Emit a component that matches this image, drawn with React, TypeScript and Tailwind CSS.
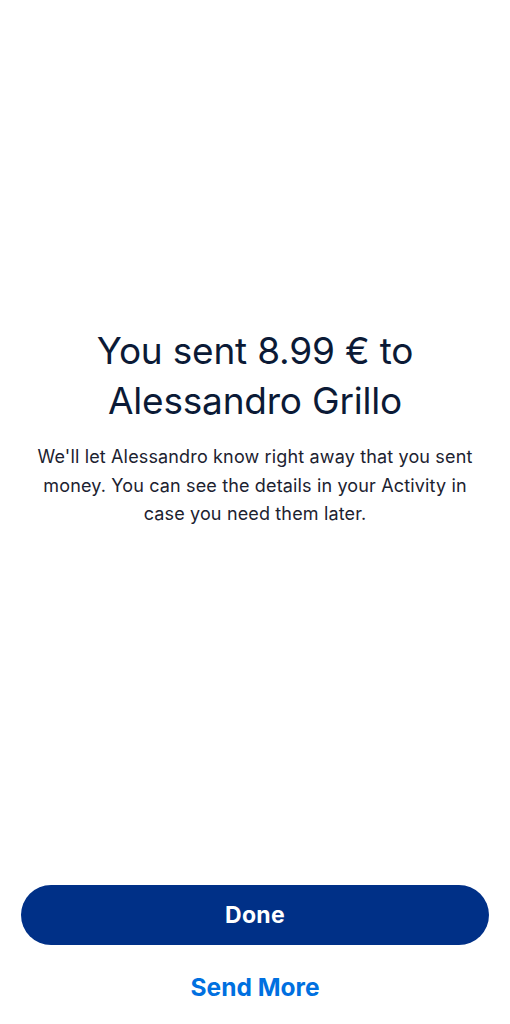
export default function App() {
	return (
		<div
			className="flex h-[1024px] w-full flex-col bg-white"
			style={{ fontFamily: "Inter, 'Liberation Sans', sans-serif" }}>
			<main className="flex flex-1 flex-col items-center px-[30px] pt-[326px]">
				<h1 className="text-center text-[37px] leading-[50px] font-normal tracking-[-0.2px] text-[#0b1a36]">
					You sent 8.99 € to
					<br />
					Alessandro Grillo
				</h1>
				<p className="mt-[17px] text-center text-[18px] leading-[28.5px] tracking-[0.15px] text-[#1c2230]">
					We'll let Alessandro know right away that you sent money. You can see the details in your Activity in case you need them later.
				</p>
			</main>
			<footer className="flex flex-col items-center px-[21px] pb-[22px]">
				<button className="h-[60px] w-full rounded-full bg-[#003087] text-[23px] font-bold tracking-[0.3px] text-white">
					Done
				</button>
				<button className="mt-[27px] h-[30px] text-[24.5px] leading-[30px] font-bold text-[#0070e0]">
					Send More
				</button>
			</footer>
		</div>
	);
}
